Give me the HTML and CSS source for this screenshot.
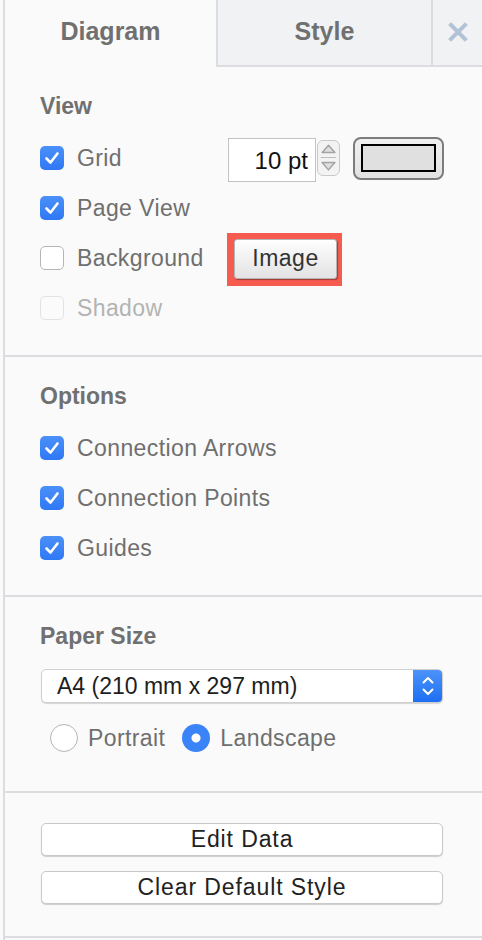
FILE: index.html
```html
<!DOCTYPE html>
<html lang="en">
<head>
    <meta charset="UTF-8">
    <meta name="viewport" content="width=device-width, initial-scale=1.0">
    <title>Format Panel</title>
    <link rel="stylesheet" href="styles.css">
</head>
<body>
    <div class="panel">
        <div class="tabs">
            <div class="tab active">Diagram</div>
            <div class="tab">Style</div>
            <div class="tab close">
                <svg width="20" height="20" viewBox="0 0 20 20"><path d="M3 3 L17 17 M17 3 L3 17" stroke="#b3c3d7" stroke-width="4" stroke-linecap="square"/></svg>
            </div>
        </div>

        <div class="section">
            <div class="title">View</div>
            <div class="row">
                <label class="opt">
                    <span class="check on"><svg width="24" height="24" viewBox="0 0 24 24"><path d="M6.5 12.5 L10.5 16.5 L17.5 7.5" fill="none" stroke="#fff" stroke-width="2.6" stroke-linecap="round" stroke-linejoin="round"/></svg></span>
                    Grid
                </label>
                <div class="grid-size">
                    <div class="num">10 pt</div>
                    <div class="spinner">
                        <svg width="23" height="36" viewBox="0 0 23 36">
                            <path d="M4.5 12 L11.5 4 L18.5 12 Z" fill="#dedede" stroke="#a3a3a3" stroke-width="1.6" stroke-linejoin="round"/>
                            <line x1="3" y1="17.5" x2="20" y2="17.5" stroke="#bdbdbd" stroke-width="1.2"/>
                            <path d="M4.5 23 L11.5 31 L18.5 23 Z" fill="#dedede" stroke="#a3a3a3" stroke-width="1.6" stroke-linejoin="round"/>
                        </svg>
                    </div>
                    <div class="color-btn"><span class="swatch"></span></div>
                </div>
            </div>
            <div class="row">
                <label class="opt">
                    <span class="check on"><svg width="24" height="24" viewBox="0 0 24 24"><path d="M6.5 12.5 L10.5 16.5 L17.5 7.5" fill="none" stroke="#fff" stroke-width="2.6" stroke-linecap="round" stroke-linejoin="round"/></svg></span>
                    Page View
                </label>
            </div>
            <div class="row">
                <label class="opt">
                    <span class="check"></span>
                    Background
                </label>
                <span class="highlight"><button class="btn image-btn">Image</button></span>
            </div>
            <div class="row">
                <label class="opt disabled">
                    <span class="check"></span>
                    Shadow
                </label>
            </div>
        </div>

        <div class="section">
            <div class="title">Options</div>
            <div class="row">
                <label class="opt">
                    <span class="check on"><svg width="24" height="24" viewBox="0 0 24 24"><path d="M6.5 12.5 L10.5 16.5 L17.5 7.5" fill="none" stroke="#fff" stroke-width="2.6" stroke-linecap="round" stroke-linejoin="round"/></svg></span>
                    Connection Arrows
                </label>
            </div>
            <div class="row">
                <label class="opt">
                    <span class="check on"><svg width="24" height="24" viewBox="0 0 24 24"><path d="M6.5 12.5 L10.5 16.5 L17.5 7.5" fill="none" stroke="#fff" stroke-width="2.6" stroke-linecap="round" stroke-linejoin="round"/></svg></span>
                    Connection Points
                </label>
            </div>
            <div class="row">
                <label class="opt">
                    <span class="check on"><svg width="24" height="24" viewBox="0 0 24 24"><path d="M6.5 12.5 L10.5 16.5 L17.5 7.5" fill="none" stroke="#fff" stroke-width="2.6" stroke-linecap="round" stroke-linejoin="round"/></svg></span>
                    Guides
                </label>
            </div>
        </div>

        <div class="section paper">
            <div class="title">Paper Size</div>
            <div class="select">
                <span class="select-text">A4 (210 mm x 297 mm)</span>
                <span class="select-arrows">
                    <svg width="14" height="22" viewBox="0 0 14 22"><path d="M2.5 7.5 L7 3 L11.5 7.5 M2.5 14.5 L7 19 L11.5 14.5" fill="none" stroke="#fff" stroke-width="2" stroke-linecap="round" stroke-linejoin="round"/></svg>
                </span>
            </div>
            <div class="radios">
                <label class="opt"><span class="radio"></span>Portrait</label>
                <label class="opt"><span class="radio on"></span>Landscape</label>
            </div>
        </div>

        <div class="section actions">
            <button class="btn wide">Edit Data</button>
            <button class="btn wide">Clear Default Style</button>
        </div>
    </div>
</body>
</html>
```

FILE: styles.css
```css
body {
    margin: 0;
    background: #fafafa;
    font-family: "Liberation Sans", Arial, sans-serif;
    color: #707070;
}
.panel {
    margin-left: 3px;
    border-left: 2px solid #dcdde0;
    min-height: 940px;
    box-sizing: border-box;
}
.tabs {
    display: flex;
    height: 67px;
}
.tab {
    box-sizing: border-box;
    width: 215px;
    display: flex;
    align-items: center;
    justify-content: center;
    font-size: 25px;
    font-weight: bold;
    color: #707070;
    background: #f1f2f4;
    border-left: 2px solid #dcdde0;
    border-bottom: 2px solid #dcdde0;
    padding-bottom: 2px;
}
.tab.active {
    width: 211px;
    background: #fafafa;
    border-left: none;
    border-bottom: none;
    padding-bottom: 4px;
}
.tab.close {
    flex: 1;
    width: auto;
}
.section {
    padding: 25px 39px 22px 35px;
    border-bottom: 2px solid #dcdde0;
}
.title {
    font-size: 23px;
    font-weight: bold;
    line-height: 28px;
    color: #707070;
    margin-bottom: 13px;
}
.row {
    height: 50px;
    display: flex;
    align-items: center;
}
.opt {
    display: flex;
    align-items: center;
    font-size: 23px;
    letter-spacing: 0.4px;
    color: #6f6f6f;
    width: 188px;
    flex-shrink: 0;
    white-space: nowrap;
}
.opt.disabled {
    color: #b3b3b3;
}
.check {
    width: 24px;
    height: 24px;
    box-sizing: border-box;
    border-radius: 5px;
    border: 1px solid #b6b6b6;
    background: #fff;
    margin-right: 13px;
    display: flex;
}
.check.on {
    border: none;
    background: linear-gradient(#4b90f8, #2f78f5);
}
.opt.disabled .check {
    border-color: #e2e2e2;
    background: #fbfbfb;
}
.grid-size {
    display: flex;
    align-items: center;
}
.num {
    box-sizing: border-box;
    width: 88px;
    height: 44px;
    margin-top: 3px;
    border: 1px solid #c3c3c3;
    background: #fff;
    font-size: 24px;
    color: #111;
    text-align: right;
    padding-right: 7px;
    line-height: 44px;
}
.spinner {
    box-sizing: border-box;
    width: 23px;
    height: 36px;
    margin-left: 1px;
    border: 1.5px solid #c9c9c9;
    border-radius: 6px;
    background: #f3f3f3;
    display: flex;
    align-items: center;
    justify-content: center;
    overflow: hidden;
}
.color-btn {
    box-sizing: border-box;
    width: 91px;
    height: 43px;
    margin-left: 13px;
    border: 2px solid #7c7c7c;
    border-radius: 8px;
    background: linear-gradient(#f0f0f0, #e2e2e2);
    display: flex;
    align-items: center;
    justify-content: center;
}
.swatch {
    box-sizing: border-box;
    width: 75px;
    height: 28px;
    border: 2px solid #000;
    background: #e0e0e0;
}
.btn {
    font-family: "Liberation Sans", Arial, sans-serif;
    font-size: 23px;
    color: #222;
    background: #fff;
    border: 1px solid #c9c9c9;
    border-radius: 5px;
    box-shadow: 0 1px 1px rgba(0, 0, 0, 0.18);
    padding: 0;
    cursor: pointer;
}
.highlight {
    display: flex;
    margin-left: -1px;
    margin-top: 2px;
    padding: 6px 5px 7px 7px;
    background: #f65b50;
}
.image-btn {
    width: 103px;
    height: 40px;
    letter-spacing: 0.5px;
    color: #333;
    border-radius: 3px;
    border-color: #b5b5b5;
    background: linear-gradient(#fefefe, #e3e3e3);
    box-shadow: 1px 1px 1px rgba(0, 0, 0, 0.35);
}
.paper .title {
    margin-bottom: 19px;
}
.select {
    height: 34px;
    box-sizing: border-box;
    margin-left: 1px;
    display: flex;
    background: #fff;
    border: 1px solid #d0d0d0;
    border-radius: 5px;
    box-shadow: 0 1px 1px rgba(0, 0, 0, 0.15);
    overflow: hidden;
}
.select-text {
    flex: 1;
    font-size: 23px;
    color: #1e1e1e;
    line-height: 32px;
    padding-left: 15px;
}
.select-arrows {
    width: 29px;
    background: linear-gradient(#4c92f9, #1d6ff3);
    display: flex;
    align-items: center;
    justify-content: center;
}
.radios {
    display: flex;
    align-items: center;
    height: 50px;
    margin-top: 10px;
    padding-left: 10px;
    margin-bottom: 6px;
}
.radios .opt {
    width: auto;
    margin-right: 17px;
}
.radio {
    width: 28px;
    height: 28px;
    box-sizing: border-box;
    border-radius: 50%;
    border: 1px solid #b4b4b4;
    background: #fff;
    margin-right: 10px;
}
.radio.on {
    border: none;
    background: radial-gradient(circle, #fff 0 4px, #3a84f7 5px);
}
.actions {
    padding-top: 30px;
    padding-bottom: 32px;
    display: flex;
    flex-direction: column;
    gap: 15px;
}
.wide {
    width: 402px;
    height: 33px;
    margin-left: 1px;
    letter-spacing: 0.9px;
}
```
